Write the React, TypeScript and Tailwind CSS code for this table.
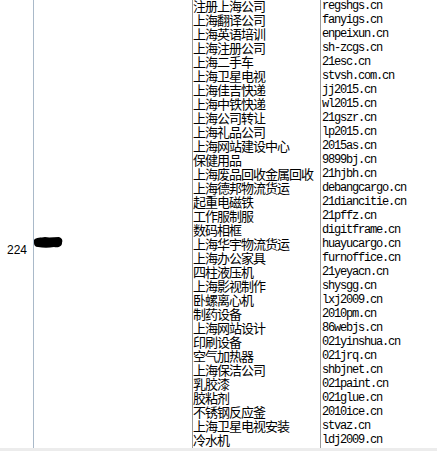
const rows: Array<[string, string]> = [
  ['注册上海公司', 'regshgs.cn'],
  ['上海翻译公司', 'fanyigs.cn'],
  ['上海英语培训', 'enpeixun.cn'],
  ['上海注册公司', 'sh-zcgs.cn'],
  ['上海二手车', '21esc.cn'],
  ['上海卫星电视', 'stvsh.com.cn'],
  ['上海佳吉快递', 'jj2015.cn'],
  ['上海中铁快递', 'wl2015.cn'],
  ['上海公司转让', '21gszr.cn'],
  ['上海礼品公司', 'lp2015.cn'],
  ['上海网站建设中心', '2015as.cn'],
  ['保健用品', '9899bj.cn'],
  ['上海废品回收金属回收', '21hjbh.cn'],
  ['上海德邦物流货运', 'debangcargo.cn'],
  ['起重电磁铁', '21diancitie.cn'],
  ['工作服制服', '21pffz.cn'],
  ['数码相框', 'digitframe.cn'],
  ['上海华宇物流货运', 'huayucargo.cn'],
  ['上海办公家具', 'furnoffice.cn'],
  ['四柱液压机', '21yeyacn.cn'],
  ['上海影视制作', 'shysgg.cn'],
  ['卧螺离心机', 'lxj2009.cn'],
  ['制药设备', '2010pm.cn'],
  ['上海网站设计', '86webjs.cn'],
  ['印刷设备', '021yinshua.cn'],
  ['空气加热器', '021jrq.cn'],
  ['上海保洁公司', 'shbjnet.cn'],
  ['乳胶漆', '021paint.cn'],
  ['胶粘剂', '021glue.cn'],
  ['不锈钢反应釜', '2010ice.cn'],
  ['上海卫星电视安装', 'stvaz.cn'],
  ['冷水机', 'ldj2009.cn'],
  ['时间继电器', 'sjjdq.cn'],
]

const cjk = { fontFamily: '"Noto Sans CJK SC", "Noto Sans", sans-serif' }
const mono = { fontFamily: '"Liberation Mono", "DejaVu Sans Mono", monospace' }

export default function App() {
  return (
    <div className="flex h-[451px] w-[437px] flex-col overflow-hidden bg-white text-black">
      <div className="flex h-[448px] overflow-hidden">
        <div className="w-[34px] shrink-0 border-r border-[#a9b9c9] pl-[7px] pt-[243px]">
          <div className="text-[12px] leading-[14px]" style={{ fontFamily: '"Liberation Sans", Arial, sans-serif' }}>
            224
          </div>
        </div>
        <div className="w-[159px] shrink-0 border-r border-[#9a9a9a] pt-[237px]">
          <Scribble />
        </div>
        <div className="mt-[-1px] w-[128px] shrink-0 border-r border-[#9a9a9a]">
          {rows.map(([name]) => (
            <div key={name} className="h-[14px] whitespace-nowrap text-[13px] leading-[14px] tracking-[-1px]" style={cjk}>
              {name}
            </div>
          ))}
        </div>
        <div className="mt-[-1px] flex-1 pl-[1px]">
          {rows.map(([, domain]) => (
            <div key={domain} className="h-[14px] whitespace-nowrap text-[12px] leading-[14px] tracking-[-1.2px]" style={mono}>
              {domain}
            </div>
          ))}
        </div>
      </div>
      <div className="h-[3px] bg-[#ececec]" />
    </div>
  )
}

function Scribble() {
  return (
    <svg className="block" width="29" height="11" viewBox="0 0 29 11">
      <path
        d="M0 3 C2 0 7 1 11 0 C15 1 20 0 25 0 C28 1 29 3 28 6 C28 9 25 11 20 10 C15 11 9 11 4 10 C1 10 0 8 0 6 Z"
        fill="#000"
      />
    </svg>
  )
}
